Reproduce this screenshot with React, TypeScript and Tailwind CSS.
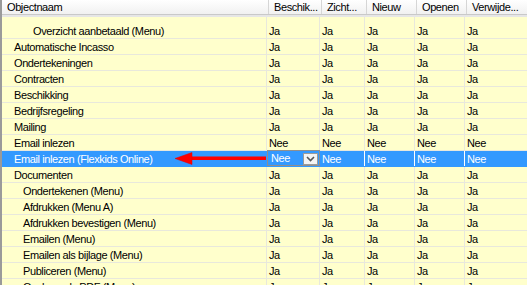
import React from "react";

type Row = { name: string; indent: number; v: string; sel?: boolean };

const rows: Row[] = [
  { name: "Overzicht aanbetaald (Menu)", indent: 31, v: "Ja" },
  { name: "Automatische Incasso", indent: 12, v: "Ja" },
  { name: "Ondertekeningen", indent: 12, v: "Ja" },
  { name: "Contracten", indent: 12, v: "Ja" },
  { name: "Beschikking", indent: 12, v: "Ja" },
  { name: "Bedrijfsregeling", indent: 12, v: "Ja" },
  { name: "Mailing", indent: 12, v: "Ja" },
  { name: "Email inlezen", indent: 12, v: "Nee" },
  { name: "Email inlezen (Flexkids Online)", indent: 12, v: "Nee", sel: true },
  { name: "Documenten", indent: 12, v: "Ja" },
  { name: "Ondertekenen (Menu)", indent: 21, v: "Ja" },
  { name: "Afdrukken (Menu A)", indent: 21, v: "Ja" },
  { name: "Afdrukken bevestigen (Menu)", indent: 21, v: "Ja" },
  { name: "Emailen (Menu)", indent: 21, v: "Ja" },
  { name: "Emailen als bijlage (Menu)", indent: 21, v: "Ja" },
  { name: "Publiceren (Menu)", indent: 21, v: "Ja" },
  { name: "Opslaan als PDF (Menu)", indent: 21, v: "Ja" },
];

const widths = [265, 53, 45, 50, 50, 70];
const headers = ["Objectnaam", "Beschik...", "Zicht...", "Nieuw", "Openen", "Verwijde..."];

export default function App() {
  return (
    <div
      className="relative w-[527px] h-[285px] overflow-hidden bg-[#ffffcc] border-l-2 border-[#9a9a9a] text-[11px] tracking-[-0.4px] text-black"
      style={{ fontFamily: '"Liberation Sans", Arial, sans-serif' }}
    >
      {/* header */}
      <div className="flex h-[15px] bg-gradient-to-b from-[#ffffff] to-[#f1f1f1] border-b border-[#c9c9c9]">
        {headers.map((h, i) => (
          <div
            key={h}
            className={`shrink-0 h-full leading-[15px] whitespace-nowrap overflow-hidden ${
              i === 0 ? "pl-[5px]" : "pl-[5px] border-l border-[#d6d6d6]"
            }`}
            style={{ width: i === 0 ? widths[0] + 1 : widths[i] }}
          >
            {h}
          </div>
        ))}
      </div>
      <div className="h-[2px] bg-[#e6e6e6]" />
      {/* filler */}
      <div className="flex h-[6px]">
        {widths.map((w, i) => (
          <div key={i} className="shrink-0 h-full border-r border-[#e8e8dc]" style={{ width: w }} />
        ))}
      </div>
      {/* rows */}
      {rows.map((r) => (
        <div
          key={r.name}
          className={`flex h-[16px] border-b ${
            r.sel ? "bg-[#3399ff] text-white border-[#3399ff]" : "border-[#e8e8dc]"
          }`}
        >
          <div
            className={`shrink-0 h-full leading-[16px] whitespace-nowrap border-r ${
              r.sel ? "border-[#3399ff]" : "border-[#e8e8dc]"
            }`}
            style={{ width: widths[0], paddingLeft: r.indent }}
          >
            {r.name}
          </div>
          {widths.slice(1).map((w, i) =>
            r.sel && i === 0 ? (
              <div
                key={i}
                className="relative shrink-0 h-[16px] -mt-px border border-[#8f8f8f] leading-[14px] pl-[3px]"
                style={{ width: w }}
              >
                {r.v}
                <div className="absolute right-[1px] top-[2px] w-[15px] h-[12px] bg-[#f4f4f4] border border-[#9a9a9a] flex items-center justify-center">
                  <svg width="9" height="6" viewBox="0 0 9 6">
                    <path d="M1 1 L4.5 4.5 L8 1" stroke="#555" strokeWidth="1.6" fill="none" />
                  </svg>
                </div>
              </div>
            ) : (
              <div
                key={i}
                className={`shrink-0 h-full leading-[16px] pl-[2px] border-r ${
                  r.sel ? "border-white" : "border-[#e8e8dc]"
                }`}
                style={{ width: w }}
              >
                {r.v}
              </div>
            )
          )}
        </div>
      ))}
      {/* arrow */}
      <svg className="absolute left-[170px] top-[149px]" width="98" height="20" viewBox="0 0 98 20">
        <rect x="18" y="7.5" width="76" height="3.5" fill="#ff0000" />
        <polygon points="3,9.5 20,3.5 20,15.5" fill="#ff0000" stroke="#e00000" strokeWidth="0.5" />
      </svg>
    </div>
  );
}
